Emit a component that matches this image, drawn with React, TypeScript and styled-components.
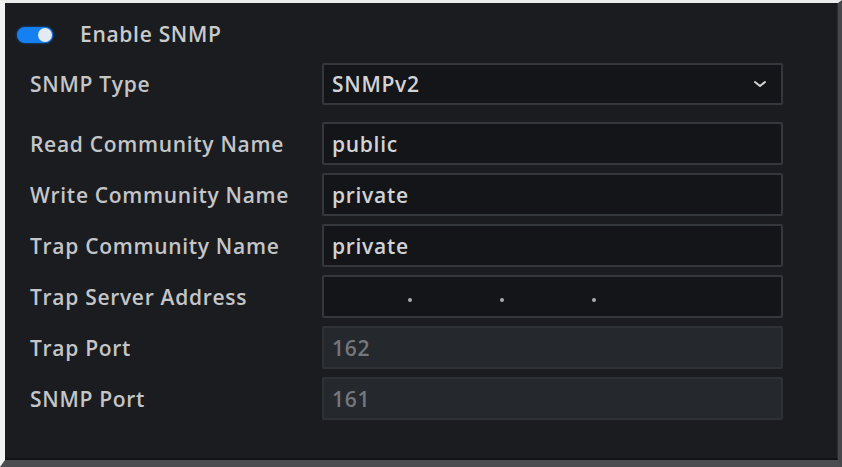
import styled, { createGlobalStyle } from "styled-components";

const GlobalStyle = createGlobalStyle`
    html, body {
        margin: 0;
        padding: 0;
        background: #3c3e42;
    }
    body {
        font-family: "Open Sans", "Noto Sans", sans-serif;
    }
`

const fields = [
    {label: "Read Community Name", value: "public"},
    {label: "Write Community Name", value: "private"},
    {label: "Trap Community Name", value: "private"},
]

const ports = [
    {label: "Trap Port", value: "162"},
    {label: "SNMP Port", value: "161"},
]

export default function App() {
    return (
        <>
            <GlobalStyle/>
            <Frame>
                <Panel>
                    <Header>
                        <Toggle>
                            <Knob/>
                        </Toggle>
                        <HeaderLabel>Enable SNMP</HeaderLabel>
                    </Header>
                    <Form>
                        <Row $gapBelow="17px">
                            <Label>SNMP Type</Label>
                            <Select>
                                <Value>SNMPv2</Value>
                                <svg width="14" height="10" viewBox="0 0 14 10">
                                    <polyline points="2,3 7,7 12,3" fill="none" stroke="#d4d4d4" strokeWidth="2"
                                              strokeLinecap="round" strokeLinejoin="round"/>
                                </svg>
                            </Select>
                        </Row>
                        {fields.map((field, index) => <Row key={index + "f"}>
                            <Label>{field.label}</Label>
                            <Input>
                                <Value>{field.value}</Value>
                            </Input>
                        </Row>)}
                        <Row>
                            <Label>Trap Server Address</Label>
                            <Input>
                                <IpSegment $width="84px"/>
                                <Dot/>
                                <IpSegment $width="92px"/>
                                <Dot/>
                                <IpSegment $width="92px"/>
                                <Dot/>
                                <IpSegment $width="92px"/>
                            </Input>
                        </Row>
                        {ports.map((port, index) => <Row key={index + "p"}>
                            <Label>{port.label}</Label>
                            <Input $disabled>
                                <Value $disabled>{port.value}</Value>
                            </Input>
                        </Row>)}
                    </Form>
                </Panel>
            </Frame>
        </>
    );
}

const Frame = styled.div`
    width: 842px;
    height: 467px;
    box-sizing: border-box;
    border-top: 3px solid #ececec;
    border-left: 5px solid #f2f2f2;
    border-right: 4px solid #45474b;
    border-bottom: 7px solid #4a4c50;
    display: flex;
`
const Panel = styled.div`
    flex: 1;
    background: #1a1c20;
    border-right: 1px solid #2a2c30;
    border-bottom: 2px solid #121316;
    padding: 23px 0 0 12px;
    display: flex;
    flex-direction: column;
`
const Header = styled.div`
    display: flex;
    align-items: center;
    height: 17px;
`
const Toggle = styled.div`
    width: 36px;
    height: 16px;
    border-radius: 8px;
    background: #1580f2;
    position: relative;
    box-shadow: 0 0 3px rgba(21, 128, 242, 0.6);
`
const Knob = styled.div`
    position: absolute;
    right: 1px;
    top: 1px;
    width: 14px;
    height: 14px;
    border-radius: 50%;
    background: #e4eaf0;
`
const HeaderLabel = styled.span`
    margin-left: 27px;
    font-size: 21px;
    font-weight: 600;
    letter-spacing: 0.7px;
    color: #c9cacc;
    line-height: 17px;
`
const Form = styled.div`
    display: flex;
    flex-direction: column;
    margin-top: 20px;
    padding-left: 13px;
`
type rowType = {
    $gapBelow?: string
}
const Row = styled.div<rowType>`
    display: flex;
    align-items: center;
    margin-bottom: ${props => props.$gapBelow ?? "8px"};
`
const Label = styled.div`
    width: 292px;
    font-size: 21px;
    font-weight: 600;
    letter-spacing: 0.7px;
    color: #c4c5c7;
`
type inputType = {
    $disabled?: boolean
}
const Input = styled.div<inputType>`
    width: 461px;
    height: 43px;
    box-sizing: border-box;
    display: flex;
    align-items: center;
    padding-left: 8px;
    background: ${props => props.$disabled ? "#25282d" : "#131518"};
    border: 2px solid ${props => props.$disabled ? "#2e3136" : "#34373c"};
    border-radius: 2px;
`
const Select = styled(Input)`
    height: 42px;
    justify-content: space-between;
    padding-right: 14px;
`
const Value = styled.span<inputType>`
    font-size: 21px;
    font-weight: 600;
    letter-spacing: 0.7px;
    color: ${props => props.$disabled ? "#74777c" : "#d2d3d5"};
`
type segmentType = {
    $width: string
}
const IpSegment = styled.div<segmentType>`
    width: ${props => props.$width};
    flex-shrink: 0;
`
const Dot = styled.div`
    width: 4px;
    height: 4px;
    border-radius: 50%;
    background: #a8aaad;
    margin-top: 6px;
    margin-left: -8px;
    margin-right: 4px;
`
